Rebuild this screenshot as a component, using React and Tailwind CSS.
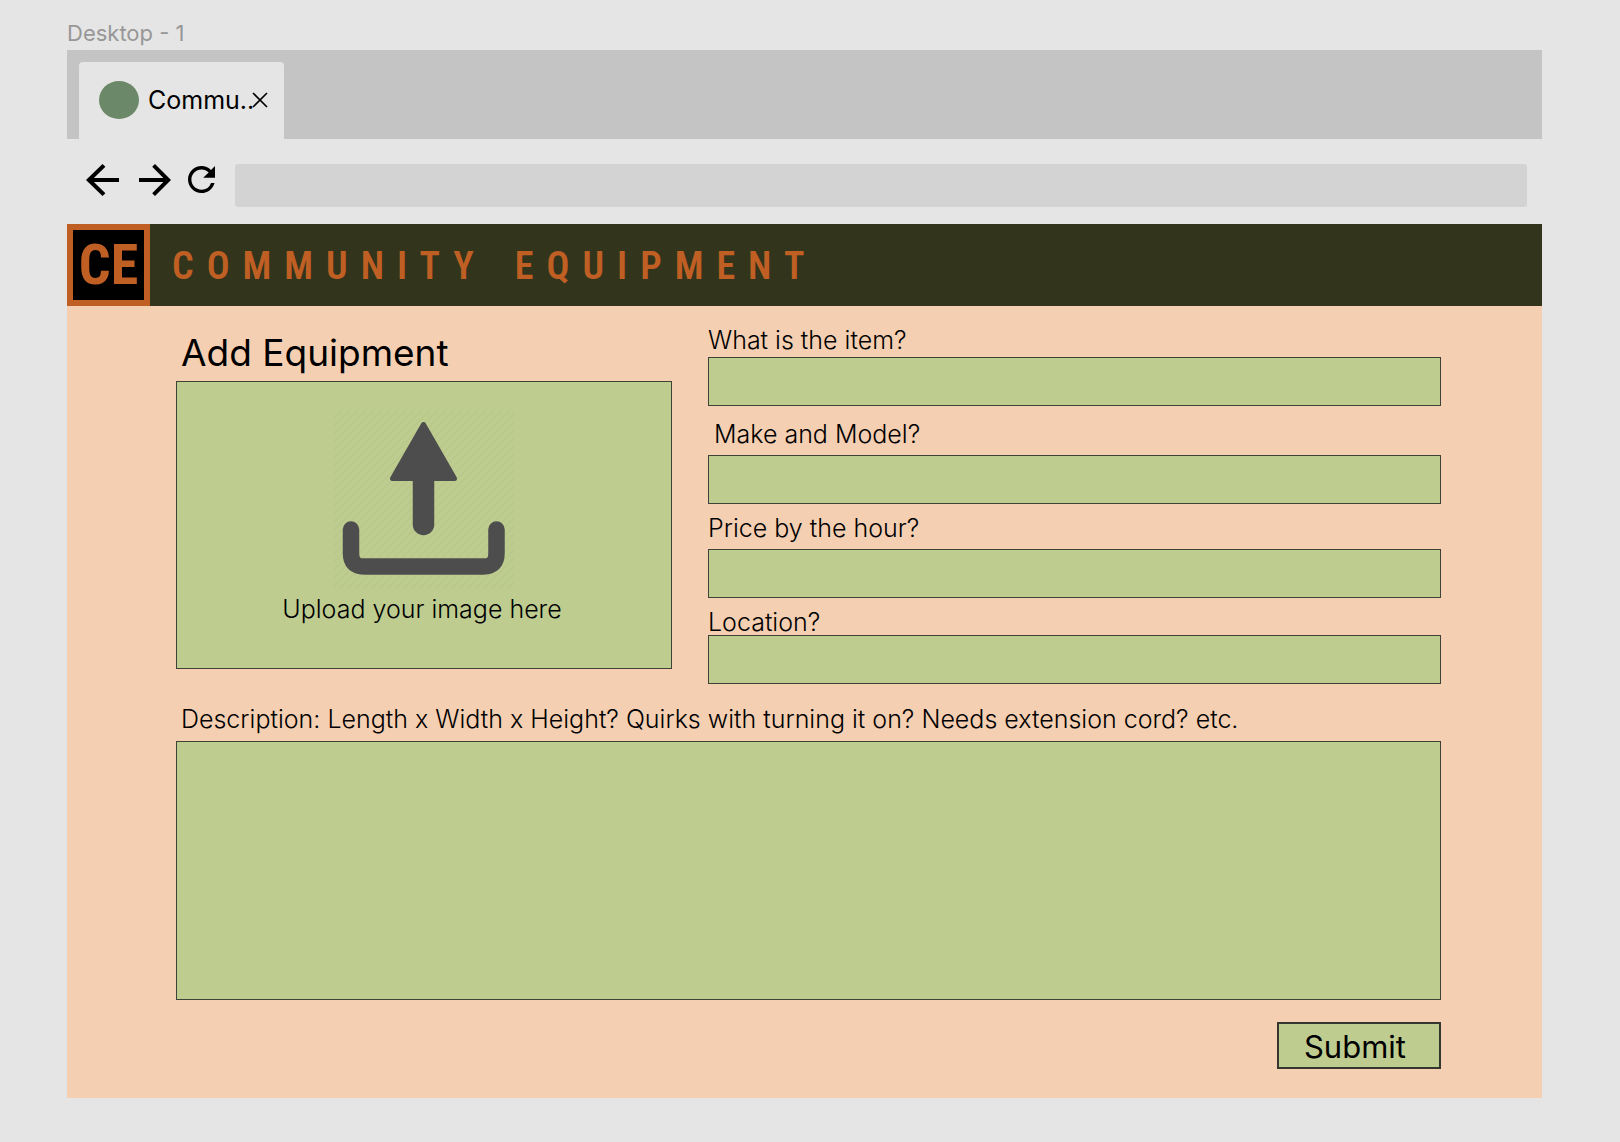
const fieldStyle =
  "block w-full rounded-none border border-[#3f4238] bg-[#becc90] px-3 text-[25px] font-light text-black outline-none";

function Field({ id, label, labelClass }) {
  return (
    <div className="flex flex-col">
      <label htmlFor={id} className={"text-[25px] leading-[26px] font-light whitespace-nowrap " + labelClass}>
        {label}
      </label>
      <input id={id} type="text" className={fieldStyle + " h-[49px]"} />
    </div>
  );
}

function BrowserTab() {
  return (
    <div className="flex h-[89px] items-end bg-[#c4c4c4] pl-3">
      <div className="flex h-[77px] w-[205px] items-center rounded-t bg-[#e5e5e5] pb-0.5 pl-5">
        <span className="h-[38px] w-10 rounded-[50%] bg-[#6b8868]" />
        <span className="ml-[9px] text-[25px] leading-[26px]">Commu..</span>
        <button type="button" aria-label="Close tab" className="-ml-0.5 shrink-0">
          <svg width="16" height="16" viewBox="0 0 16 16" fill="none" stroke="#000" strokeWidth="1.6">
            <path d="M1 1 15 15M15 1 1 15" />
          </svg>
        </button>
      </div>
    </div>
  );
}

function Toolbar() {
  return (
    <div className="flex h-[85px] items-center pr-[15px] pb-1 pl-[19px]">
      <button type="button" aria-label="Back" className="shrink-0">
        <svg width="33" height="32" viewBox="4 4 16 16" preserveAspectRatio="none">
          <path d="M20 11H7.83l5.59-5.59L12 4l-8 8 8 8 1.41-1.41L7.83 13H20v-2z" />
        </svg>
      </button>
      <button type="button" aria-label="Forward" className="ml-5 shrink-0">
        <svg width="32" height="32" viewBox="4 4 16 16">
          <path d="m12 4-1.41 1.41L16.17 11H4v2h12.17l-5.58 5.59L12 20l8-8z" />
        </svg>
      </button>
      <button type="button" aria-label="Reload" className="ml-[17px] shrink-0">
        <svg width="27" height="27" viewBox="4 4 16 16">
          <path d="M17.65 6.35A7.958 7.958 0 0 0 12 4c-4.42 0-7.99 3.58-7.99 8s3.57 8 7.99 8c3.73 0 6.84-2.55 7.73-6h-2.08A5.99 5.99 0 0 1 12 18c-3.31 0-6-2.69-6-6s2.69-6 6-6c1.66 0 3.14.69 4.22 1.78L13 11h7V4l-2.35 2.35z" />
        </svg>
      </button>
      <input
        type="text"
        aria-label="Address"
        className="mb-[13px] ml-5 h-[43px] min-w-0 flex-1 self-end rounded-[3px] bg-[#d3d3d3] px-3 text-xl outline-none"
      />
    </div>
  );
}

function SiteHeader() {
  return (
    <header className="flex h-[82px] items-stretch bg-[#32351b] font-['Roboto_Condensed','Liberation_Sans_Narrow','Roboto',sans-serif] text-[#c05f24]">
      <div className="flex w-[83px] shrink-0 items-center justify-center border-[6px] border-[#c05f24] bg-black text-[56px] leading-none font-bold">
        CE
      </div>
      <h1 className="flex items-center gap-7 pt-0.5 pl-[22px] text-[38px] font-semibold tracking-[13px] whitespace-nowrap">
        <span>COMMUNITY</span> <span>EQUIPMENT</span>
      </h1>
    </header>
  );
}

function UploadIcon() {
  return (
    <svg width="180" height="178" viewBox="0 0 180 178">
      <defs>
        <pattern id="stripes" width="8" height="8" patternUnits="userSpaceOnUse">
          <path d="M-1 1 1 -1M0 8 8 0M7 9 9 7" stroke="#b9c88b" strokeWidth="2" />
        </pattern>
      </defs>
      <rect width="180" height="178" fill="url(#stripes)" />
      <path
        d="M89.5 14.5 58.5 68.5H120.5Z"
        fill="#4d4d4d"
        stroke="#4d4d4d"
        strokeWidth="5"
        strokeLinejoin="round"
      />
      <path d="M89.5 60V114.5" stroke="#4d4d4d" strokeWidth="21.5" strokeLinecap="round" />
      <path
        d="M17 119.5V143.5Q17 156.5 30 156.5H149.5Q162.5 156.5 162.5 143.5V119.5"
        fill="none"
        stroke="#4d4d4d"
        strokeWidth="16.5"
        strokeLinecap="round"
      />
    </svg>
  );
}

export default function App() {
  return (
    <div className="min-h-screen bg-[#e5e5e5] pt-5 pr-[78px] pb-11 pl-[67px] font-['Inter',sans-serif] text-black">
      <p className="h-[30px] text-[22px] leading-[26px] text-[#979797]">Desktop - 1</p>
      <BrowserTab />
      <Toolbar />
      <SiteHeader />
      <main className="bg-[#f4cfb2] pr-[101px] pb-[29px] pl-[109px]">
        <form onSubmit={(e) => e.preventDefault()}>
          <div className="grid grid-cols-[496fr_733fr] gap-x-9">
            <div className="pt-[27px]">
              <h2 className="pl-[5px] text-[37px] leading-10 whitespace-nowrap">Add Equipment</h2>
              <label className="mt-2 flex h-[288px] cursor-pointer flex-col items-center border border-[#3f4238] bg-[#becc90] pt-7">
                <UploadIcon />
                <span className="mt-2 pr-1 text-[25px] leading-[26px] font-light">Upload your image here</span>
                <input type="file" accept="image/*" className="sr-only" />
              </label>
            </div>
            <div className="flex flex-col gap-[11px] pt-[21px]">
              <Field id="item" label="What is the item?" labelClass="mb-1" />
              <Field id="model" label="Make and Model?" labelClass="mt-1 mb-2 pl-1.5" />
              <Field id="price" label="Price by the hour?" labelClass="mb-2" />
              <Field id="location" label="Location?" labelClass="" />
            </div>
          </div>
          <label htmlFor="description" className="mt-[22px] block pl-[5px] text-[25px] leading-[26px] font-light">
            Description: Length x Width x Height? Quirks with turning it on? Needs extension cord? etc.
          </label>
          <textarea id="description" className={fieldStyle + " mt-[9px] h-[259px] resize-none py-2"} />
          <div className="mt-[22px] flex justify-end">
            <button
              type="submit"
              className="h-[47px] w-[164px] border-2 border-[#34362f] bg-[#becc90] pt-0.5 pr-2 text-[31px] leading-10"
            >
              Submit
            </button>
          </div>
        </form>
      </main>
    </div>
  );
}
